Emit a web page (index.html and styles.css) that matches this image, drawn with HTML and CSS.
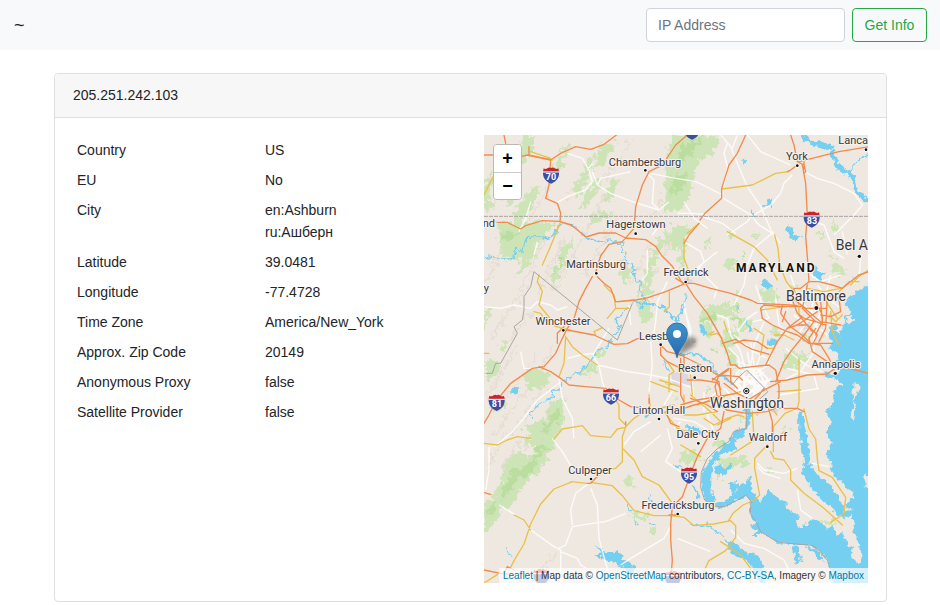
FILE: index.html
```html
<!DOCTYPE html>
<html lang="en">
<head>
<meta charset="utf-8">
<meta name="viewport" content="width=device-width, initial-scale=1">
<title>IP Info</title>
<link rel="stylesheet" href="styles.css">
</head>
<body>
<nav class="navbar">
  <a class="brand" href="#">~</a>
  <form class="lookup">
    <input class="field" type="text" placeholder="IP Address" aria-label="IP Address">
    <button class="submit" type="submit">Get Info</button>
  </form>
</nav>
<main class="card">
  <header class="card-header">205.251.242.103</header>
  <div class="card-body">
    <div class="details">
      <table class="facts">
        <tbody>
          <tr><th scope="row">Country</th><td>US</td></tr>
          <tr><th scope="row">EU</th><td>No</td></tr>
          <tr><th scope="row">City</th><td>en:Ashburn<br>ru:Ашберн</td></tr>
          <tr><th scope="row">Latitude</th><td>39.0481</td></tr>
          <tr><th scope="row">Longitude</th><td>-77.4728</td></tr>
          <tr><th scope="row">Time Zone</th><td>America/New_York</td></tr>
          <tr><th scope="row">Approx. Zip Code</th><td>20149</td></tr>
          <tr><th scope="row">Anonymous Proxy</th><td>false</td></tr>
          <tr><th scope="row">Satellite Provider</th><td>false</td></tr>
        </tbody>
      </table>
    </div>
    <div class="map">
      <svg class="tiles" viewBox="0 0 384 448" preserveAspectRatio="xMidYMid slice">
        <defs>
          <filter id="rough" x="0" y="0" width="1152" height="1344" filterUnits="userSpaceOnUse">
            <feTurbulence type="fractalNoise" baseFrequency="0.06" numOctaves="3" seed="4" result="n"/>
            <feDisplacementMap in="SourceGraphic" in2="n" scale="45" xChannelSelector="R" yChannelSelector="G"/>
          </filter>
          <filter id="shore" x="0" y="0" width="1152" height="1344" filterUnits="userSpaceOnUse">
            <feTurbulence type="fractalNoise" baseFrequency="0.06" numOctaves="2" seed="9" result="n"/>
            <feDisplacementMap in="SourceGraphic" in2="n" scale="24" xChannelSelector="R" yChannelSelector="G"/>
          </filter>
          <filter id="soft" x="-50%" y="-50%" width="200%" height="200%"><feGaussianBlur stdDeviation="6"/></filter>
          <linearGradient id="pin" x1="0" y1="0" x2="0" y2="1">
            <stop offset="0" stop-color="#3f93cc"/><stop offset="1" stop-color="#2469ae"/>
          </linearGradient>
          <g id="shield">
            <path d="M-22-21q5 4 11 0q6-5 11-1q5-4 11 1q6 4 11 0l2 10h-48z" fill="#c5272d"/>
            <path d="M-24-10h48c1 17-8 29-24 35c-16-6-25-18-24-35z" fill="#3b4ea5"/>
            <path d="M-24-10h48" stroke="#fff" stroke-width="3"/>
          </g>
        </defs>
        <svg viewBox="0 0 1152 1344" width="384" height="448">
          <rect width="1152" height="1344" fill="#efe8e1"/>

          <g fill="none" stroke="#e2dacd" stroke-width="7" stroke-linecap="round" opacity=".65" filter="url(#rough)">
            <path d="M120 20L20 230M230 90L130 270M330 60L250 200M390 130L310 280M440 20L350 150M560 150L500 260M70 300L10 440M190 290L110 470M240 310L160 480M310 280L210 470M400 250L300 420M520 400L460 520M500 330L440 450M560 300L540 370"/>
            <path d="M110 480L20 610M150 520L60 640M100 630L10 790M160 660L60 800M130 760L30 900M190 740L80 900M240 790L120 940M210 630L160 720M60 900L10 1000M110 910L50 1010M220 1250L130 1344M90 1030L10 1120"/>
          </g>

          <g fill="#cde4b6" filter="url(#rough)">
            <path d="M120 0l40 0-20 50-40 60-15-10 20-60zM0 130l20-15 5 60-25 50zM240 30l15 5-35 90-25 10zM345 30l60-10-50 70-20 10zM320 60l15 5-30 80-30 50-5-30zM330 130l22 20-40 60-30 20zM130 170l40-20-20 60-50 60-15-30zM90 50l20 40-20 110-20 10zM560 0l70 0 85 10-30 50-40 20-20 60-10 60-60 30-15-40 10-70-20-30 20-30zM540 160l40-20 30 40-20 50-50 0z"/>
            <path d="M40 265l90-5 90 5-60 60-50 50-30 0-30-20zM0 205l15-10 15 20-20 15zM265 305l5 20-50 90-10 30 5-60zM240 325l25 5-50 110-15 10 5-40zM150 330l15 10-40 60-30 25 10-40zM340 230l50 0-20 25-60 10zM570 265l50 10-30 60-30 5-10-40zM380 130l20 5-15 60-25 10zM600 300l10 60-20 50-10-50zM515 330l30-40 10 20-35 60-30 70-15-10zM420 370l20 40-15 40-15-20zM490 415l20-5-10 60-25 20-10-10z"/>
            <path d="M0 530l20-5-15 60-5 10zM0 680l35-10 15 40-35 25-15-5zM50 625l20-10 10 15-25 15zM130 700l50 5 20 15-25 45-45-5-10-30zM195 800l40-10 10 70-40 60-30 20-50-10 10-40-20-10 70-30zM90 950l40 15 50-45 20-20 10 30-50 90-40 30-40 60-30 20-40 20-20-10 50-80 20-60zM0 1100l40-20 20 10-20 60-40 50zM15 800l50 0-5 20-20 10-20-5z"/>
            <path d="M640 540l40-30 40 0 40 30 50 20-10 30-40-10-20-40-40 0-20 20-30 0zM735 495l30 20-10 15-25-15zM760 460l15 15-25 10zM900 650l40 0 35 10-40 40-40 10zM660 560l25 20-15 25-20-15zM725 580l40 10-10 40-30 20-20-20zM730 640l35 30-15 35-20-20zM830 460l40 0 0 50-30-10zM590 950l50-5 10 30-30 10-30-5zM700 905l30 15-10 20-30-10zM680 545l25 10-25 20zM725 970l60-10 10 30-40 0-30 10-20-10zM700 1010l15 20-20 20zM600 970l30 10-5 10-25-10zM1010 1160l40-15 0 20-25 10zM1070 780l-5 20-15-10zM765 975l30 0-15 15z"/>
            <path d="M435 1130l60 10-5 15-40 0zM490 1175l30 5-10 20zM140 1310l-10 10-15-15zM415 1020l30 5 0 35-15 0zM730 370l30 10-15 30-20-10zM805 290l20 5-15 20zM1045 260l15 15-10 25-10-20zM1000 300l25-5 0 15-25 0zM1030 360l20-5-5 20zM1040 385l50 20-10 15-40-10zM870 470l20 15-10 20zM1110 420l20 10-10 10zM860 580l30 10-10 20zM670 310l15 10-15 20-15-10zM735 280l15 5-5 25-15-10zM620 610l20 5-10 20zM900 870l15 10-10 10zM565 780l15 5-5 15zM770 840l15 10-15 10zM340 650l30-10-10 25-20 0zM290 700l30-10 30 10-10 10-50 10zM460 500l30 0 20 40-20 30-25-30zM920 450l20 5-10 10z"/>
          </g>
          <g fill="#b4dc97" opacity=".7" filter="url(#rough)">
            <path d="M600 20l60-10-40 50-40 20zM570 120l40 0-20 50-30 10zM170 920l20 10-50 80-30 20zM90 1000l40 0-60 80-20-10zM220 820l10 30-40 40-20-10zM50 1090l-20 40-20 20 10-40zM225 360l10 10-25 60zM60 290l50 0-20 20-40 10zM650 550l40-15 10 15-40 15zM740 545l30 5 5 20-30-10zM760 510l15 20-15 5zM740 600l15 15-15 20zM710 910l20 10-20 10z"/>
            <path d="M770 350l20 5-10 15zM955 600l30 0-10 15zM800 830l20 5-10 15zM685 640l20 5-10 15zM780 690l20 0-10 15zM850 1000l20 0-10 20zM1090 1100l15 10-10 15zM540 740l15 0-5 15zM600 740l15 5-10 10zM660 760l20 0-5 12z"/>
          </g>
          <path d="M562 715l30-5 20 10 10 30-55 0zM865 810l20 5-5 20-20-5zM952 570l25-10 0 20-20 5zM600 430l30 5-10 10-20 0z" fill="#dcd7e5"/>

          <g fill="#75cff0" filter="url(#shore)">
            <path d="M1190 445L1150 455 1120 465 1100 480 1085 500 1090 520 1105 530 1080 545 1085 565 1040 575 1035 600 1045 620 1035 640 1060 655 1055 680 1075 700 1055 720 1030 710 1020 720 1055 735 1075 745 1045 770 1050 800 1025 830 1045 860 1025 890 1040 920 1025 960 1040 975 1045 1010 1065 1035 1100 1065 1105 1090 1085 1110 1100 1125 1078 1130 1065 1085 1048 1065 1035 1040 1008 1030 992 1008 981 998 976 960 973 920 962 870 955 830 945 830 946 900 955 950 962 990 952 1010 972 1045 998 1075 1012 1095 1042 1115 1055 1138 1085 1150 1106 1140 1111 1190 1128 1230 1133 1270 1125 1288 1100 1262 1110 1240 1090 1230 1075 1195 1055 1200 1045 1170 1030 1180 1010 1165 985 1155 955 1175 945 1180 935 1160 945 1145 920 1125 905 1115 905 1100 890 1090 870 1080 850 1065 845 1080 830 1100 815 1085 805 1060 798 1018 785 1045 770 1050 755 1075 720 1105 695 1100 683 1080 682 1045 682 1010 692 985 705 970 735 950 755 940 755 915 785 895 800 860 798 785 785 785 785 875 750 890 735 920 705 940 685 970 660 1005 652 1050 660 1090 685 1115 720 1118 760 1095 785 1082 800 1100 797 1135 820 1165 830 1190 870 1215 890 1225 985 1232 1005 1245 1030 1275 1040 1300 1040 1400 1190 1400z"/>
            <path d="M720 1215L760 1232 785 1250 820 1262 835 1285 848 1344 830 1344 810 1305 780 1275 745 1255zM925 1232L945 1232 945 1260 965 1280 950 1275 935 1290 930 1260zM960 1232L1000 1245 1025 1280 1000 1275 985 1250zM890 1160L880 1130 860 1100 880 1110 905 1140zM700 985L720 1000 735 985 745 1000 715 1020 690 1015zM735 1045L760 1040 765 1055 745 1085zM800 1165L822 1165 835 1200 805 1200 820 1190z"/>
            <path d="M905 265l25 20 5 20 20 5-15 10-20-10-10-25zM990 385l15 20 20 10-20 20-15-10zM840 430l30 25-20 10-20-15zM860 190l5 25-25 0 10-20zM330 1225l30 25 30 5 10-10 15 20 40 30-10 30-30-25-25-20-30-10-30-10 25-5zM640 560l20 20 10 20-15-5zM785 550l15 25 10 20-15-10zM610 870l30 10 20 15-20 5-30-10zM805 222l10 25-15 0zM755 505l10 15-10 5zM850 615l15-5 20 10-10 10-20 0zM780 70l8 15-12 0zM80 760l30-5-10 20-15 5zM485 830l25 0-5 15-20 0z"/>
          </g>
          <g fill="#efe8e1" filter="url(#shore)">
            <path d="M1112 740q15 10 10 30l-12 30 5 30-10 30-4-30 8-30 0-30zM1190 1010l-50 12 5 30 45 17zM1090 545l20 5-15 15-10-5zM1050 585l18-20 12 10-15 25z"/>
          </g>
          <g fill="none" stroke="#75cff0" stroke-linecap="round" stroke-linejoin="round" filter="url(#shore)">
            <path stroke-width="12" d="M955 -15q10 40 40 42l50 10M1045 50q5 30 20 45l40 30 8 40 65 50"/>
            <path stroke-width="5" d="M1152 60l-30 15-15 20-5 30M585 655l60 5 35 20 10 30 50 30M450 500l50 8 40 10 20 25 20 15M605 480l-10 50-15 30"/>
            <path stroke-width="4" d="M-10 362l60 10 40 0 5-35 20 15 10-35 15-15 25 5 30 5 20-15 5-20 15-10 30 5 50 40 40 10 30-5 30 10-5 25 20 5-5 30 20 0 5 40 20 15-5 25 20 30-20 25"/>
            <path stroke-width="4" stroke-dasharray="22 3" d="M430 520l-20 20-20 15 20 20-20 25-20 35-30 10-10 25-20 15-20 25-40 20-20 20-5 15-20 0 0 20-20 15-30 20-20 20 10 10"/>
            <path stroke-width="7" d="M625 1055l20 25"/>
            <path stroke-width="4" d="M570 990l20 10M495 1080l10 25M430 1115l10 15M450 1160l10 10M500 1165l15 10M70 1245l15 20M620 1170l30 5 20-5 15 10 30 25M540 680l10 25"/>
          </g>

          <g fill="none" stroke="#fff" stroke-width="4" stroke-linejoin="round" opacity=".85">
            <path d="M250 55l45 15 20 35 10 35-20 25-55 20-35 20M310 105l15-20M325 110l15 40 40 25 65 25 80 25 30-25M340 150l10-20 90-20M490 115l20 20-5 70 20 20M500 115l75 15M576 130l60 10 80 40M715 180l15-85-10-40 10-30M710 0l30 35 20 50 30 70 40 60 35 80 25 30M710 185l90 55 25 30 40 25M655 245l60 20 40 30M670 240l-40-5-50 0M810 240l50-30 30-35 10-30 25-25M730 300l60-40 15-20M790 0l40 50 90 40M960 110l40 20 50 15 60 30 25 35-25 30-60 60M1075 290l15 70M970 255l50 15 30 80 30 20M1130 370l-5 60-20 20M870 290l-60 50-20 50-10 60-30 60M600 320l50 30 10 30-30 40M700 350l-50 40-40 30"/>
            <path d="M0 515l50 5 40-10 50 10 20-20 40 10 20 15 30-10M140 200l-15 50-20 40M160 320l-10 40M490 345l0 70-15 20M520 280l-15 20M375 580l-45 75-40 5-40 10M340 690l90 20 70 10 50 10 80 30M345 695l-20-40M345 690l10 50 15 40M225 730l10 60 30 60 5 60M225 745l-65 50-45 60-35 40-50 40M110 650l10 50 30 0M440 570l-5-60M550 440l-30 60-5 60-10 60M500 620l5 70-10 80M500 860l-50 30-30 40M590 1010l-45-30 20-40-15-60M530 900l-60 50M15 935l0 70-10 60M265 1170l-5-45 15-50 40-30M320 1060l20 50 5 100 30 110M45 1110l50 30M140 1185l70 50 20 10 0 100M225 1240l20-10 20-55 60-10 40-5 60-25M230 1250l50 20 10 20 50 30M440 1270l50-30 50-30 20-35M410 1290l30-20M205 910l30 40 30 50M680 1250l-100-40"/>
            <path d="M600 500l10 60 10 50M620 630l0-50-20-60M690 490l10-30-40-40M700 540l30 10 10 50 30 50M750 600l60 50 40 20M760 590l30-40 30-20M815 450l20 60 20 40-50 10M875 490l10 80 30 30M800 620l10 70-10 60M770 650l15 60-30 40 40 40M735 640l30 30 0 60M810 650l20 10-30 80 40 20M780 690l60 60M745 730l90-10M760 770l80-60M840 560l-30 70-10 60M870 640l-20 50-40 30M890 740l60-30 40-60 0-60M910 700l80 20 10 40M905 640l60 50 50 20M885 780l120-20M890 810l50 20M920 420l20 60-30 40M950 400l60 40M1000 450l30 40 40 30M820 985l20 20 60 10 40-15M985 985l50 10M820 995l20 20 50 15M940 1065l10 60 35 25M740 1185l40 40 60 15 60 35 20 40M690 890l-20-50 30-20M570 850l60 10 50 30M570 760l-30 50M590 860l-20 20M760 0l-15 40M600 200l30 50 40 30M1010 440l60-20M900 410l-60-10M620 710l10 90M660 770l0 60M700 770l-50 40M720 760l50 50M1020 500l20-80"/>
            <g stroke-width="5"><path d="M770 690l10 40 30 10 10 30 20-20-30-30 20-20M760 710l-10 30 30 40 30-20 20 20 20-50-30-30-50 5M790 650l10 60-20 40 10 60M740 760l40 20 50-20M930 540l60 50 20-60 30 40M950 500l80 80M990 470l-10 90 50 40M1000 520l-60 80M850 770l-30-30M760 680l60 20 30 60M740 720l60 70 60-60M770 730l60 30M800 680l-50 90M780 700v80M810 700v80M760 740h90"/></g>
          </g>

          <g fill="none" stroke="#e9c04a" stroke-width="4" stroke-linejoin="round" stroke-linecap="round">
            <path d="M30 120l-30 60M140 50l60 20M135 60l70 15M230 260l-35 85-20 45M165 420l-5 20 15 30-10 40 25 30 25 35M230 580l30 5M150 530l20 5 20 30 45 15M245 605l-5 80-15 40M245 605l20 30 30 25 45 30M335 600l-5-10 25-12M360 450l30 30 5 40-25 30M395 520l40 0M400 500l50-5M0 655l15 0M715 162l90-12 70-35 40-5M645 265l-35 30M600 310l0 60 15 40-5 30M730 290l80 45 40 40 30 60M872 300l10 40 5 50 20 50 20 25M556 470l0 45-15 15M680 600l20-5 15 15M1100 450l30-30 25-15M1125 440l-30 0-30 30M1040 530l5 60 20 40M1020 490l40 60M900 515l-70 10M810 580l30 20-10 60M850 640l20 0M945 670l0 130-5 20M880 770l70-5M550 680l20 30-15 10 0 50M527 735l60 20M570 810l-90 20-30 20-25 25M425 875l-10 30 0 75-20 20-40 5"/>
            <path d="M0 925l40 5 30-15 30-10 40 5M210 912l25-30 60-10 25 30 60 5 20-25 25-5M425 870l-20-20 0-40-10-15M320 1042l65 10 30 30 35 45 60 15 50 0 40 5 30 25 60-5 50-10 15 15 0 35-30 40-50 30-20 40M260 1042l-50 20-40 45-30 60-20 60-30 50-10 20M90 1140l30 15 20 30M260 1040l50 5M415 940l35 35 25 50 50 25 40 55M710 1220l60 40 30 40 0 50M732 1160l15-25 30-25 35-15 15-15-15-80 0-30 38-40M860 950l10 20 30 5 20 30 0 30 40 40 60 45 55 50M805 830l5 85-30 20-40 25M868 950l0-75 35-40 35-15M960 822l15 60 20 30 5 60 5 35 40 20 40 60-5 50-40 25M864 820l15 20M600 780l0 60M620 780l60 50 30 30M600 840l40 0 60-10M660 850l30 20 40-20M540 830l40 50 30 10 20 15M590 930l60 35M495 780l5 50M0 1344l40-25"/>
            <path d="M870 600l30 0 30 15M690 800l40-20M640 810l50-20 80-20M620 720l5 60M720 560l10 30M930 460l15 50 0 30M970 460l50 10 50-10M1075 540l-20 20-20-20M880 910l20-20M500 740l80 30M670 600l20-10M730 850l30-10 20 5M700 870l40-20"/>
          </g>
          <g fill="none" stroke="#f28b4c" stroke-width="4" stroke-linejoin="round" stroke-linecap="round">
            <path d="M60 0l5 25M0 60l30 0M110 65l20-5 70 15M135 60l0-25M200 75l30-20 45-20 45 8 40-15 40-30 20-5M200 75l-5 75-10 40 35 15 10 30-2 25M40 262l30 0 40 20 15-10 50-15 52 2 35 11 44 36 39-12 50 0 30 15 60 5 30 20 20 30 30 30 30 50M610 0l-35 30-40 60-40 20-20 40-20 65-5 65-35 40-40 8-25 35-10 30-5 20M785 0l-25 55-25 35-22 70 0 30-50 45-15 20M645 265l-30 35-15 25M605 445l-60 25-60 20-30 5-50 5-10 0M340 425l20 20 20 15 15 40M325 425l-20 35-20 40-15 50-20 30-15 30-20 45-35 40-35 5-65 45-45 55-20 40-15 25M240 575l-20 20 0 30M250 585l80 15 60 28 40-2 30-15 40 0M165 695l35 15 30 20 25 20 50 5 60 5 40 35 35 20 50 5M495 790l0 15M425 870l0-10"/>
            <path d="M605 445l25 40 40 50 40 70 20 50 10 35M575 430l25 15 30 0 50 15 60 15 60 20 20 10 100 5 20 2M530 630l0 30 20 20 40 20M530 630l20 20 40 10 60 30 50 30M590 670l0 110 10 20M600 660l0 50M610 735l40 0 50 8 10 20M955 90l10 55 5 100-5 60 5 60 5 75M940 90l-20 15-10 5M945 80l60-15 60-15 90-15M920 0l10 30 10 50 20 10 5 20-5 5M960 80l0 20"/>
            <path d="M975 440l30 0 40 10 30 10 50-40 30-10M975 440l-25 20-20 0-5 35 15 40 20 15 35 10 30 10M950 515l-60 0-50-5-10 10 5 30 30 20 45 20 30 10 35 25 30 0M895 510l-5 25 30 40 40 30 20 20 30 5 25 40 15 35M950 550l-40 30-30 40-15 30-20 40M990 560l-30 40-40 50-20 30-25 60M1000 530l-60 40-30 10M950 510l60 50 60 10M925 490l40 30 60 0M1030 480l35 10 5 40-30 15-30-5M995 580l-20 30 10 40 45 30M1010 500l5 60-20 40M1030 480l-5 100-20 40M945 540l40 50M905 530l-10 30M970 450l-15 70 40 40M1015 570l0-30-20-40M985 630l15-30-30-30-30 0M1000 625h45"/>
            <path d="M740 690l15 0 10 10 40-5 50-5 20 15 10 50 0 30-12 35-25 10-60 5-60-10-25-20-5-30-5-20 10-30 30-20M720 745l40 30 20 10M705 720l60 5 10 10M740 700l0 40 20 20M785 800l15-10 50-30 40-20M860 740l50-5 60-15 60-3 20-15M840 760l-15 20-20 20M590 810l50-15 60-10 60-10M570 830l60-20 60-15M735 700l-30 20-20 15M715 625l40-12 30 20 20 10 50 15M850 640l-30-20-40-5-30 10M880 820l60 0 20 10M850 810l15 50 0 40M720 830l-10 50-40 30-30 55-20 50M610 1045l-15 40-30 30-5 50 0 50 5 60-8 100M555 1140l30 0M350 1015l-30 30-10 0M0 1073l20 5M0 1305l50 10 20 2M60 1315l10-20 20 10M1095 700l60 15M700 830l-30-20-50-20M700 785l-10 25M545 830l15 35 25 10M710 780l-5-40-20-10"/>
          </g>
          <g fill="none" stroke="#a7a4a5" stroke-width="3">
            <path d="M0 244h1152" stroke-dasharray="12 3"/>
            <path d="M150 410l250 205 45-110M150 410l-10 45-20 30 0 40-5 30-25 20 10 20-50 90-15 0-10 30-20 0M720 720l25 30 15-20 28-25 64 65-45 40M787 800v80l-38 10-15 30-35 22-30 30-17 40-2 45 12 38 28 20 30 0 45-22 20-13 17 20-4 35 20 28 12 27 40 25 20 8 95 8 20 15 25 30 10 30"/>
          </g>

          <g fill="#111" stroke="#fff" stroke-width="4" paint-order="stroke">
            <circle cx="484" cy="106" r="4"/><circle cx="940" cy="92" r="4"/><circle cx="1146" cy="44" r="4"/><circle cx="455" cy="296" r="4"/><circle cx="337" cy="415" r="4"/><circle cx="605" cy="441" r="4"/><circle cx="1126" cy="364" r="5"/><circle cx="997" cy="519" r="6"/><circle cx="238" cy="586" r="4"/><circle cx="530" cy="629" r="4"/><circle cx="632" cy="728" r="4"/><circle cx="1054" cy="715" r="5"/><circle cx="525" cy="852" r="4"/><circle cx="643" cy="925" r="4"/><circle cx="850" cy="935" r="4"/><circle cx="321" cy="1032" r="4"/><circle cx="581" cy="1137" r="4"/>
          </g>
          <circle cx="787" cy="768" r="8" fill="#fff" stroke="#222" stroke-width="3"/><circle cx="787" cy="768" r="4" fill="#222"/>
          <use href="#shield" x="201" y="121"/><use href="#shield" x="983" y="253"/><use href="#shield" x="38" y="803"/><use href="#shield" x="381" y="784"/><use href="#shield" x="615" y="1021"/><use href="#shield" x="624" y="-11"/><use href="#shield" x="172" y="1326"/><use href="#shield" x="567" y="1332"/>
        </svg>

        <g class="route">
          <text x="67" y="45">70</text><text x="328" y="89">83</text><text x="13" y="272">81</text><text x="127" y="266">66</text><text x="205" y="345">95</text>
        </g>
        <g class="town">
          <text x="161" y="31">Chambersburg</text><text x="313" y="25">York</text><text class="end" x="384" y="9">Lanca</text>
          <text x="152" y="93">Hagerstown</text><text class="end" x="11" y="92">nd</text><text x="112" y="133">Martinsburg</text><text x="202" y="141">Frederick</text>
          <text class="end" x="5" y="157">y</text><text x="79" y="190">Winchester</text><text class="start" x="155" y="205">Leesb</text><text x="211" y="237">Reston</text>
          <text x="352" y="233">Annapolis</text><text x="175" y="279">Linton Hall</text><text x="214" y="303">Dale City</text><text x="284" y="306">Waldorf</text>
          <text x="106" y="339">Culpeper</text><text x="194" y="374">Fredericksburg</text>
        </g>
        <g class="town city">
          <text x="332" y="166">Baltimore</text><text x="263" y="273">Washington</text><text class="end" x="384" y="115">Bel A</text>
        </g>
        <text class="state" x="252" y="137">MARYLAND</text>

        <svg viewBox="0 0 1152 1344" width="384" height="448">
          <path d="M580 664l18-48 22-12 18 8-8 22z" fill="#000" opacity=".4" filter="url(#soft)"/>
          <path d="M579 668C574 640 548 622 548 595a31 31 0 0 1 62 0C610 622 584 640 579 668z" fill="url(#pin)" stroke="#2d73ac" stroke-width="3"/>
          <circle cx="579" cy="597" r="12" fill="#fff"/>
        </svg>
      </svg>
      <div class="zoom">
        <button type="button" aria-label="Zoom in">+</button>
        <button type="button" aria-label="Zoom out">−</button>
      </div>
      <div class="credit"><a href="#">Leaflet</a> | Map data © <a href="#">OpenStreetMap</a> contributors, <a href="#">CC-BY-SA</a>, Imagery © <a href="#">Mapbox</a></div>
    </div>
  </div>
</main>
</body>
</html>
```

FILE: styles.css
```css
* { box-sizing: border-box; }

body {
  margin: 0;
  background: #fff;
  color: #212529;
  font: 14px/22px "Liberation Sans", Arial, sans-serif;
}

a { text-decoration: none; }

.navbar {
  display: flex;
  align-items: center;
  justify-content: space-between;
  padding: 8px 13px 8px 14px;
  background: #f8f9fb;
}

.brand {
  color: #212529;
  font-size: 18px;
}

.lookup {
  display: flex;
  gap: 7px;
}

.field,
.submit {
  height: 34px;
  padding: 0 11px;
  border: 1px solid #ced4da;
  border-radius: 4px;
  font: inherit;
}

.field {
  width: 199px;
  background: #fff;
  color: #495057;
}

.field::placeholder {
  color: #6c757d;
  opacity: 1;
}

.submit {
  min-width: 75px;
  border-color: #28a745;
  background: transparent;
  color: #28a745;
}

.card {
  margin: 23px 53px 3px 54px;
  border: 1px solid #dfdfdf;
  border-radius: 4px;
}

.card-header {
  padding: 11px 18px;
  border-bottom: 1px solid #dfdfdf;
  border-radius: 3px 3px 0 0;
  background: #f7f7f7;
  line-height: 21px;
}

.card-body {
  display: grid;
  grid-template-columns: minmax(0, 411fr) minmax(0, 384fr);
  padding: 17px 18px 18px;
}

.facts {
  width: 100%;
  border-collapse: collapse;
  table-layout: fixed;
}

.facts th,
.facts td {
  padding: 4px;
  font-weight: 400;
  text-align: left;
  vertical-align: top;
}

.facts th { width: 188px; }

.map {
  position: relative;
  overflow: hidden;
  background: #efe8e1;
}

.tiles {
  display: block;
  width: 100%;
}

.town {
  fill: #38383e;
  stroke: #f6f1ec;
  stroke-width: 2px;
  stroke-linejoin: round;
  paint-order: stroke;
  font: 400 11px Roboto, sans-serif;
  text-anchor: middle;
}

.city { font-size: 14px; }
.town .start { text-anchor: start; }
.town .end { text-anchor: end; }

.state {
  fill: #111;
  stroke: #f6f1ec;
  stroke-width: 2px;
  paint-order: stroke;
  font: 700 12px Roboto, sans-serif;
  letter-spacing: 2px;
}

.route {
  fill: #fff;
  font: 700 9px Roboto, sans-serif;
  text-anchor: middle;
}

.zoom {
  position: absolute;
  top: 9px;
  left: 9px;
  display: grid;
  border: 1px solid #bdb8b2;
  border-radius: 4px;
  overflow: hidden;
}

.zoom button {
  width: 27px;
  height: 27px;
  padding: 0;
  border: 0;
  background: #fff;
  color: #000;
  font: 700 18px/27px "Liberation Sans", Arial, sans-serif;
}

.zoom button + button { border-top: 1px solid #ccc; }

.credit {
  position: absolute;
  right: 0;
  bottom: 0;
  padding: 0 4px;
  background: rgba(255, 255, 255, .7);
  color: #333;
  font-size: 10px;
  line-height: 15px;
  white-space: nowrap;
}

.credit a { color: #0078a8; }
```
